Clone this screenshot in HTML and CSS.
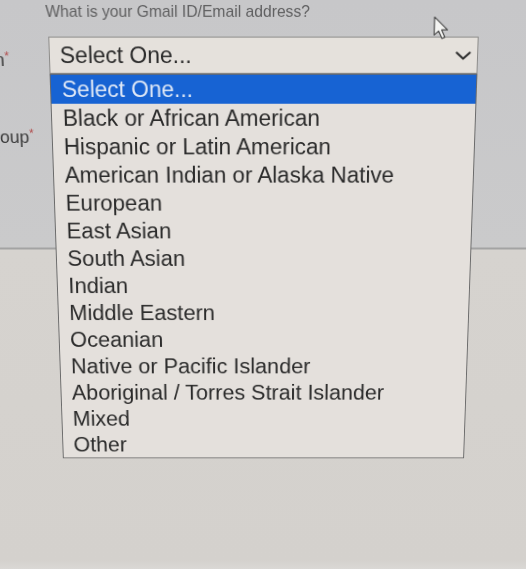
FILE: index.html
```html
<!DOCTYPE html>
<html lang="en">
<head>
<meta charset="utf-8">
<title>Select One</title>
<link rel="stylesheet" href="styles.css">
</head>
<body>
<div class="screen">
  <p class="question">What is your Gmail ID/Email address?</p>
  <div class="form">
    <div class="row">
      <label class="label">Religion<span class="req">*</span></label>
      <div class="field">
        <div class="select">
          <span>Select One...</span>
          <svg class="chevron" viewBox="0 0 16 9" width="16" height="9"><path d="M1.5 1.5 L8 7.5 L14.5 1.5" fill="none" stroke="#2f2f2f" stroke-width="2.2" stroke-linecap="round" stroke-linejoin="round"/></svg>
        </div>
        <ul class="listbox">
          <li class="option selected">Select One...</li>
          <li class="option">Black or African American</li>
          <li class="option">Hispanic or Latin American</li>
          <li class="option">American Indian or Alaska Native</li>
          <li class="option">European</li>
          <li class="option">East Asian</li>
          <li class="option">South Asian</li>
          <li class="option">Indian</li>
          <li class="option">Middle Eastern</li>
          <li class="option">Oceanian</li>
          <li class="option">Native or Pacific Islander</li>
          <li class="option">Aboriginal / Torres Strait Islander</li>
          <li class="option">Mixed</li>
          <li class="option">Other</li>
        </ul>
      </div>
    </div>
    <div class="row">
      <label class="label">Age Group<span class="req">*</span></label>
      <div class="field field-hidden"></div>
    </div>
  </div>
  <svg class="cursor" viewBox="0 0 14 21" width="16" height="24"><path d="M1 1 L1 17 L4.8 13.4 L7.8 20 L10.4 18.9 L7.5 12.4 L12.6 12.4 Z" fill="#f4f4f2" stroke="#4a4a4a" stroke-width="1" stroke-linejoin="round"/></svg>
</div>
</body>
</html>
```
FILE: styles.css
```css
html, body {
  margin: 0;
  height: 100%;
  overflow: hidden;
}

body {
  background: linear-gradient(to bottom,
    #c7c7c9 0px,
    #cacacb 247px,
    #a3a3a3 248px,
    #a3a3a3 249px,
    #d6d3cf 250px,
    #d4d1cd 560px,
    #dad8d5 569px);
  font-family: "Liberation Sans", Arial, sans-serif;
}

.screen {
  position: relative;
  width: 526px;
  height: 640px;
  transform: perspective(600px) rotateX(-5.5deg);
  transform-origin: 50% 0;
}

.question {
  margin: 0 0 16px;
  padding: 3px 0 0 45px;
  font-size: 15.7px;
  line-height: 18px;
  color: #5f5f60;
}

.form {
  display: flex;
  flex-direction: column;
  gap: 42px;
  margin-left: -63px;
}

.row {
  display: grid;
  grid-template-columns: 110px 433px;
}

.label {
  padding-top: 10px;
  font-size: 18px;
  line-height: 20px;
  color: #3a3a3a;
  white-space: nowrap;
}

.req {
  color: #b04848;
  font-size: 12px;
  vertical-align: 6px;
}

.field {
  position: relative;
}

.field-hidden {
  height: 38px;
}

.select {
  height: 38px;
  box-sizing: border-box;
  display: flex;
  align-items: center;
  justify-content: space-between;
  padding: 0 6px 0 10px;
  border: 1px solid #8d8c8a;
  background: #e5e1dc;
  font-size: 23px;
  color: #2a2a2a;
}

.chevron {
  display: block;
}

.listbox {
  position: absolute;
  top: 100%;
  left: 0;
  z-index: 5;
  width: 433px;
  box-sizing: border-box;
  margin: 0;
  padding: 0;
  list-style: none;
  border: 1px solid #6a6a6a;
  background: #e4e0dc;
}

.option {
  height: 30px;
  line-height: 30px;
  padding-left: 11px;
  font-size: 23px;
  color: #2b2b2b;
  white-space: nowrap;
}

.option.selected {
  background: #1763d3;
  color: #dfe8f6;
}

.cursor {
  position: absolute;
  left: 434px;
  top: 16px;
}
```
